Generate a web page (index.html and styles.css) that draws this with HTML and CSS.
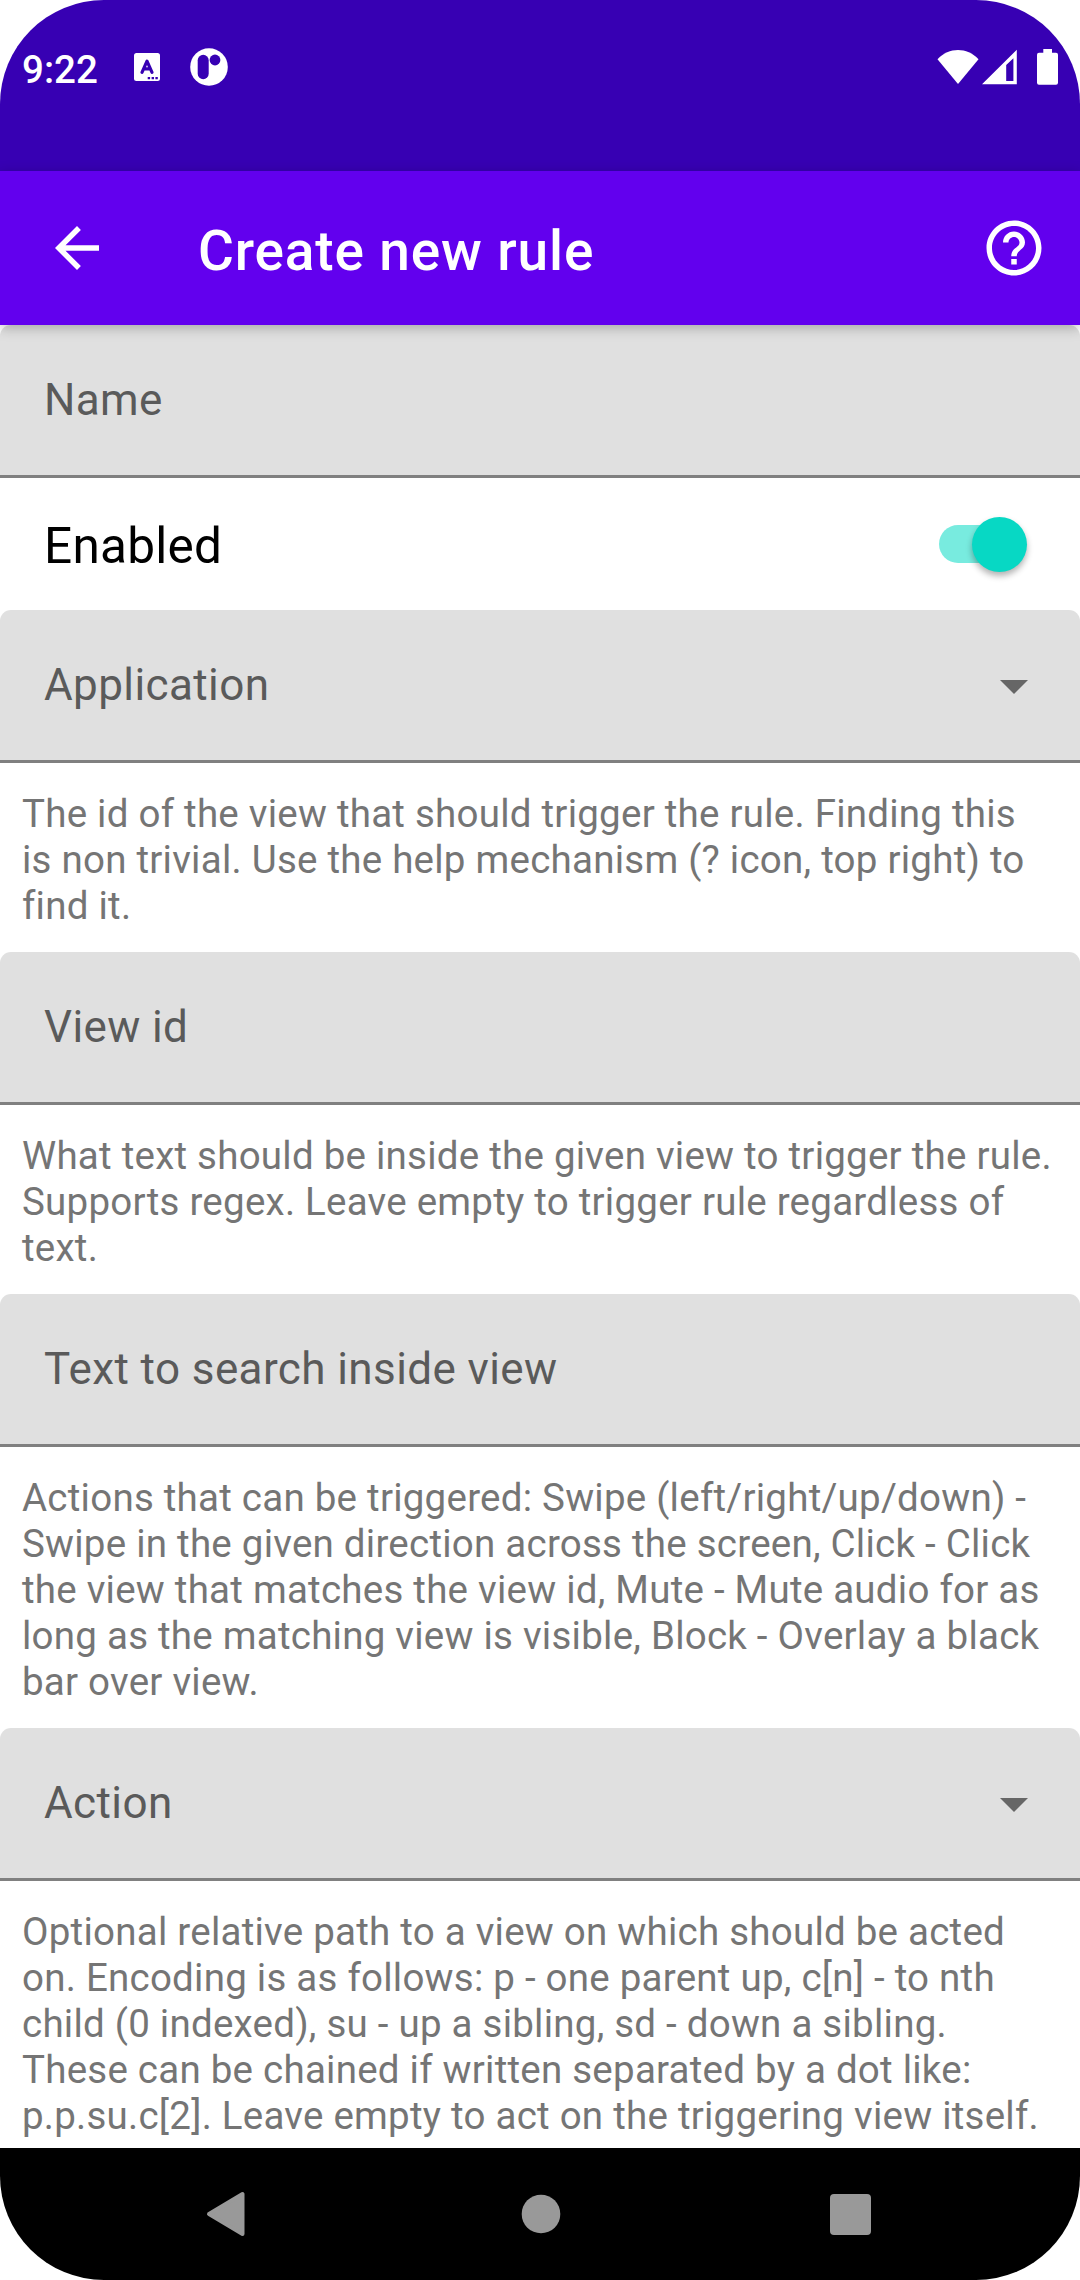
FILE: index.html
```html
<!DOCTYPE html>
<html lang="en">
<head>
<meta charset="utf-8">
<title>Create new rule</title>
<link rel="stylesheet" href="styles.css">
</head>
<body>
<div class="screen">
  <header class="status-bar">
    <div class="status-left">
      <span class="clock">9:22</span>
      <svg class="icon-keyboard" width="26" height="28" viewBox="0 0 26 28">
        <rect width="26" height="28" rx="2.5" fill="#fff"/>
        <path d="M8 19.3 L13 8.2 L18 19.3 M9.8 15.8 H16.2" fill="none" stroke="#3700b3" stroke-width="3.2" stroke-linecap="round" stroke-linejoin="round"/>
        <path d="M13.7 24h2.4v2.2h-2.4zM17.6 24H20v2.2h-2.4zM21.4 24h2.4v2.2h-2.4z" fill="#3700b3"/>
      </svg>
      <svg class="icon-app" width="38" height="38" viewBox="0 0 38 38">
        <circle cx="19" cy="19" r="18.8" fill="#fff"/>
        <rect x="7.7" y="6.8" width="11" height="24.4" rx="5.5" fill="#3700b3"/>
        <circle cx="25" cy="12" r="5.4" fill="#3700b3"/>
      </svg>
    </div>
    <div class="status-right">
      <svg width="42" height="36" viewBox="0 0 42 36"><path d="M0.5 10.2 C12 -2 30 -2 41.5 10.2 L21 35z" fill="#fff"/></svg>
      <svg class="icon-signal" width="35" height="36" viewBox="0 0 35 36"><path fill-rule="evenodd" d="M0 35.2 L34.8 .8 V35.2z M24.2 16 V32 H31.4 V9.2z" fill="#fff"/></svg>
      <svg class="icon-battery" width="21" height="36" viewBox="0 0 21 36"><path d="M6.3 0H15v3.7h4q2 0 2 2v28q0 2-2 2H2q-2 0-2-2v-28q0-2 2-2h4.300z" fill="#fff"/></svg>
    </div>
  </header>
  <div class="app-bar">
    <svg width="66" height="66" viewBox="0 0 24 24"><path d="M20 11H7.830l5.590-5.590L12 4l-8 8 8 8 1.410-1.410L7.830 13H20v-2z" fill="#fff"/></svg>
    <h1 class="title">Create new rule</h1>
    <svg width="66" height="66" viewBox="0 0 24 24"><path d="M11 18h2v-2h-2v2zm1-16C6.480 2 2 6.480 2 12s4.480 10 10 10 10-4.480 10-10S17.520 2 12 2zm0 18c-4.410 0-8-3.590-8-8s3.590-8 8-8 8 3.590 8 8-3.590 8-8 8zm0-14c-2.210 0-4 1.790-4 4h2c0-1.100.9-2 2-2s2 .9 2 2c0 2-3 1.750-3 5h2c0-2.250 3-2.500 3-5 0-2.210-1.790-4-4-4z" fill="#fff"/></svg>
  </div>
  <main class="form">
    <div class="field"><span>Name</span></div>
    <div class="switch-row"><span>Enabled</span><div class="track"><div class="thumb"></div></div></div>
    <div class="field"><span>Application</span><svg width="28" height="14" viewBox="0 0 28 14"><path d="M0 0H28L14 14z" fill="#666"/></svg></div>
    <p class="helper">The id of the view that should trigger the rule. Finding this<br>is non trivial. Use the help mechanism (? icon, top right) to<br>find it.</p>
    <div class="field"><span>View id</span></div>
    <p class="helper">What text should be inside the given view to trigger the rule.<br>Supports regex. Leave empty to trigger rule regardless of<br>text.</p>
    <div class="field"><span>Text to search inside view</span></div>
    <p class="helper">Actions that can be triggered: Swipe (left/right/up/down) -<br>Swipe in the given direction across the screen, Click - Click<br>the view that matches the view id, Mute - Mute audio for as<br>long as the matching view is visible, Block - Overlay a black<br>bar over view.</p>
    <div class="field"><span>Action</span><svg width="28" height="14" viewBox="0 0 28 14"><path d="M0 0H28L14 14z" fill="#666"/></svg></div>
    <p class="helper">Optional relative path to a view on which should be acted<br>on. Encoding is as follows: p - one parent up, c[n] - to nth<br>child (0 indexed), su - up a sibling, sd - down a sibling.<br>These can be chained if written separated by a dot like:<br>p.p.su.c[2]. Leave empty to act on the triggering view itself.</p>
  </main>
  <nav class="nav-bar">
    <svg width="40" height="46" viewBox="0 0 40 46"><path d="M3 23 L36.500 3 V43z" fill="#999" stroke="#999" stroke-width="4" stroke-linejoin="round"/></svg>
    <svg class="nav-home" width="40" height="40" viewBox="0 0 40 40"><circle cx="20" cy="20" r="19.300" fill="#999"/></svg>
    <svg width="41" height="41" viewBox="0 0 41 41"><rect width="41" height="41" rx="4" fill="#999"/></svg>
  </nav>
</div>
</body>
</html>
```
FILE: styles.css
```css
* { box-sizing: border-box; }
body { margin: 0; background: #fff; font-family: Roboto, sans-serif; }
.screen {
  width: 1080px;
  height: 2280px;
  display: flex;
  flex-direction: column;
  border-radius: 104px;
  overflow: hidden;
  background: #fff;
}
.status-bar {
  height: 171px;
  flex: none;
  display: flex;
  justify-content: space-between;
  align-items: flex-start;
  padding: 48px 22px 0;
  background: #3700b3;
}
.status-left { display: flex; align-items: center; height: 38px; }
.clock { width: 112px; padding-top: 6px; font-size: 38.5px; font-weight: 500; line-height: 44px; color: #fff; }
.icon-app { margin-left: 29.5px; }
.status-right { display: flex; align-items: flex-start; padding-top: 1px; }
.status-right svg { display: block; }
.icon-signal { margin-left: 3px; }
.icon-battery { margin-left: 20px; }
.app-bar {
  height: 154px;
  flex: none;
  display: flex;
  align-items: center;
  padding: 0 33px 0 44px;
  background: #6200ee;
  position: relative;
  box-shadow: 0 3px 12px rgba(0, 0, 0, .25);
}
.title {
  flex: 1;
  margin: 0;
  padding: 5px 0 0 88px;
  font-size: 55px;
  font-weight: 500;
  letter-spacing: .85px;
  line-height: 64px;
  color: #fff;
}
.form { flex: 1; min-height: 0; overflow: hidden; }
.field {
  height: 153px;
  display: flex;
  align-items: center;
  justify-content: space-between;
  padding: 0 52px 0 44px;
  border-radius: 11px 11px 0 0;
  background: linear-gradient(#e0e0e0 150px, #808080 150px);
  font-size: 44px;
  letter-spacing: .4px;
  line-height: 52px;
  color: #5a5a5a;
}
.field span { padding-bottom: 3px; }
.switch-row {
  height: 132px;
  display: flex;
  align-items: center;
  justify-content: space-between;
  padding: 0 53px 0 44px;
  font-size: 49.5px;
  letter-spacing: .25px;
  line-height: 58px;
  color: #000;
}
.switch-row span { padding-top: 4px; }
.track {
  width: 88px;
  height: 38px;
  display: flex;
  align-items: center;
  justify-content: flex-end;
  border-radius: 19px;
  background: linear-gradient(90deg, #78ebdf 60px, transparent 60px);
}
.thumb { width: 55px; height: 55px; flex: none; border-radius: 50%; background: #07d8c4; box-shadow: 0 4px 6px rgba(0, 0, 0, .3); }
.helper {
  margin: 0;
  padding: 28px 0 23px 22px;
  font-size: 38.5px;
  letter-spacing: .24px;
  line-height: 46px;
  white-space: nowrap;
  color: #757575;
}
.nav-bar {
  height: 132px;
  flex: none;
  display: flex;
  align-items: center;
  justify-content: space-between;
  padding: 0 209px 0 206px;
  background: #000;
}
.nav-home { margin-left: 5px; }
```
